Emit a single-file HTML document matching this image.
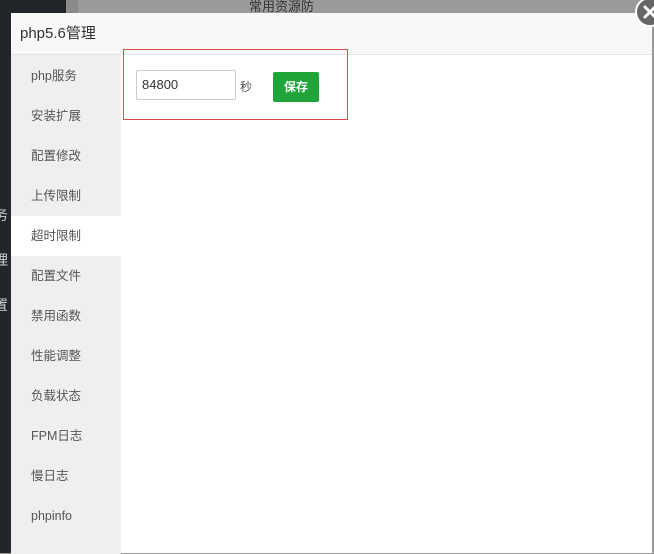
<!DOCTYPE html>
<html><head><meta charset="utf-8"><style>
body{margin:0;width:654px;height:553px;overflow:hidden;position:relative;background:#9a9a9a;font-family:"Liberation Sans","Noto Sans CJK SC",sans-serif;}
.bgdark{position:absolute;left:0;top:0;width:66px;height:553px;background:#22262b;}
.bgmid{position:absolute;left:66px;top:0;width:12px;height:13px;background:#8a8a8a;}
.bgtxt{position:absolute;left:249px;top:-4px;font-size:13px;color:#333;}
.side-t{position:absolute;left:-6px;font-size:14px;color:#ccc;}
.dlg{position:absolute;left:11px;top:13px;width:641px;height:540px;background:#fff;}
.hd{height:41px;background:#f8f8f8;border-bottom:1px solid #e5e5e5;font-size:15px;color:#333;line-height:41px;padding-left:9px;}
.sb{position:absolute;left:0;top:42px;width:110px;height:498px;background:#efefef;padding-top:1px;}
.it{height:40px;line-height:40px;padding-left:20px;font-size:12.5px;color:#555;}
.it.on{background:#fff;}
.box{position:absolute;left:112px;top:36px;width:223px;height:69px;border:1px solid #e0474c;}
.inp{position:absolute;left:12px;top:20px;border:1px solid #ccc;border-radius:2px;font-size:13px;color:#333;line-height:28px;padding-left:5px;box-sizing:border-box;width:100px;height:30px;}
.sec{position:absolute;left:116px;top:28px;font-size:12px;color:#555;}
.btn{position:absolute;left:149px;top:22px;width:46px;height:30px;background:#20a53a;border-radius:2px;color:#fff;font-size:12px;font-weight:bold;text-align:center;line-height:30px;}
.cls{position:absolute;left:635px;top:-3px;width:30px;height:30px;border-radius:50%;background:#666;border:2px solid #fff;box-sizing:border-box;}
.rs{position:absolute;left:652px;top:28px;width:2px;height:525px;background:#999;}
</style></head><body>
<div class="bgdark"></div><div class="bgmid"></div>
<div class="bgtxt">常用资源防</div>
<div class="side-t" style="top:205px">务</div>
<div class="side-t" style="top:250px">理</div>
<div class="side-t" style="top:295px">置</div>
<div class="dlg">
<div class="hd">php5.6管理</div>
<div class="sb">
<div class="it">php服务</div><div class="it">安装扩展</div><div class="it">配置修改</div><div class="it">上传限制</div><div class="it on">超时限制</div><div class="it">配置文件</div><div class="it">禁用函数</div><div class="it">性能调整</div><div class="it">负载状态</div><div class="it">FPM日志</div><div class="it">慢日志</div><div class="it">phpinfo</div>
</div>
<div class="box"><div class="inp">84800</div><div class="sec">秒</div><div class="btn">保存</div></div>
</div>
<div class="rs"></div>
<div class="cls"><svg width="26" height="26" viewBox="0 0 26 26" style="position:absolute;left:0;top:0"><path d="M8 8L18 18M18 8L8 18" stroke="#fff" stroke-width="3" stroke-linecap="round"/></svg></div>
</body></html>
